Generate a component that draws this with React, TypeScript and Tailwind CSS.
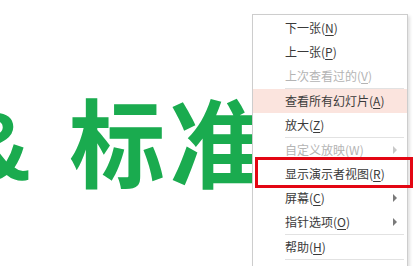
import React from "react";

type Item = {
  label: string;
  key: string;
  disabled?: boolean;
  active?: boolean;
  submenu?: boolean;
  sepAfter?: boolean;
};

const items: Item[] = [
  { label: "下一张", key: "N" },
  { label: "上一张", key: "P" },
  { label: "上次查看过的", key: "V", disabled: true, sepAfter: true },
  { label: "查看所有幻灯片", key: "A", active: true },
  { label: "放大", key: "Z", sepAfter: true },
  { label: "自定义放映", key: "W", disabled: true, submenu: true },
  { label: "显示演示者视图", key: "R" },
  { label: "屏幕", key: "C", submenu: true },
  { label: "指针选项", key: "O", submenu: true, sepAfter: true },
  { label: "帮助", key: "H", sepAfter: true },
];

function MenuRow({ item }: { item: Item }) {
  return (
    <div className="relative">
      <div
        className={`flex h-6 items-center justify-between pl-[32px] pr-[10px] text-[12px] ${
          item.disabled ? "text-[#b4b4b4]" : "text-[#3a3a3a]"
        } ${item.active ? "bg-[#fbe4de]" : ""}`}
      >
        <span>
          {item.label}(<span className="underline underline-offset-2">{item.key}</span>)
        </span>
        {item.submenu && (
          <span
            className={`h-0 w-0 border-y-[4px] border-l-[4px] border-y-transparent ${
              item.disabled ? "border-l-[#c8c8c8]" : "border-l-[#7a7a7a]"
            }`}
          />
        )}
      </div>
      {item.sepAfter && <div className="ml-[32px] mr-[3px] h-px bg-[#e2e2e2]" />}
    </div>
  );
}

export default function App() {
  return (
    <div
      className="relative h-[266px] w-[420px] overflow-hidden bg-white"
      style={{ fontFamily: '"Noto Sans CJK SC", "Noto Sans", sans-serif' }}
    >
      <div className="flex items-baseline pt-[84px] text-[96px] leading-[1.15] font-bold text-[#1aab4f]">
        <span className="ml-[-38px]" style={{ fontFamily: '"Liberation Sans", sans-serif' }}>
          &amp;
        </span>
        <span className="ml-[38px] tracking-[4px]">标准</span>
      </div>

      <div className="absolute left-[252px] top-[14px] w-[156px] border border-[#cdcdcd] bg-white py-[1px] shadow-[2px_2px_3px_rgba(0,0,0,0.12)]">
        {items.map((item) => (
          <MenuRow key={item.label} item={item} />
        ))}
        <div className="h-6" />
      </div>

      <div className="absolute left-[255px] top-[157px] h-[31px] w-[158px] border-[3px] border-[#e30613]" />
    </div>
  );
}
